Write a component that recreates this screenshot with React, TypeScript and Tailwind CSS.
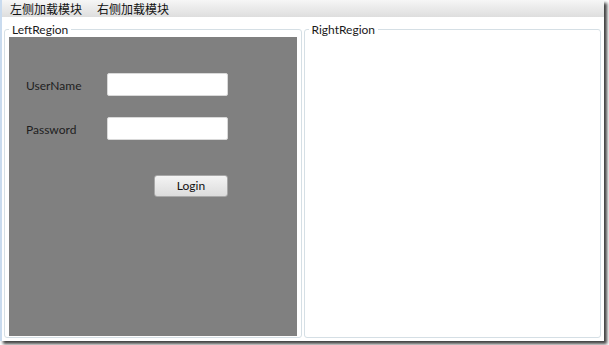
import * as React from "react";

// ─── Form row ────────────────────────────────────────────────────────────────

function Field({ label, type = "text" }: { label: string; type?: string }) {
  return (
    <div className="flex items-center h-[23px]">
      <span className="w-[81px] text-[12px] text-[#1e1e1e] translate-y-[1px]">{label}</span>
      <input
        type={type}
        className="w-[121px] h-[23px] bg-white border border-[#d9d9d9] rounded-[2px] outline-none"
      />
    </div>
  );
}

// ─── Region (WPF-style group box) ─────────────────────────────────────────────

function Region({ title, children }: { title: string; children?: React.ReactNode }) {
  return (
    <fieldset className="flex-1 flex flex-col h-[316px] border border-[#d5dfe5] rounded-[3px] px-[4px] pb-[1px] min-w-0">
      <legend className="px-[3px] text-[12px] leading-[15px] text-[#1a1a1a]">{title}</legend>
      {children}
    </fieldset>
  );
}

export default function App() {
  return (
    <div
      className="w-[609px] h-[345px] bg-white"
      style={{ fontFamily: '"Lato", "Noto Sans", "Noto Sans CJK SC", sans-serif' }}
    >
      <div className="w-[604px] h-[341px] flex flex-col bg-white border-l-2 border-[#c9dbef] shadow-[3px_3px_3px_rgba(0,0,0,0.75)]">
        {/* Menu */}
        <div className="h-[18px] flex items-center gap-[15px] pl-[8px] bg-gradient-to-b from-[#f6f6f6] to-[#dedede] border-b border-white">
          <span className="text-[12px] leading-none text-[#111]" style={{ fontFamily: '"Noto Sans CJK SC", sans-serif' }}>左侧加载模块</span>
          <span className="text-[12px] leading-none text-[#111]" style={{ fontFamily: '"Noto Sans CJK SC", sans-serif' }}>右侧加载模块</span>
        </div>

        {/* Regions */}
        <div className="flex gap-[2px] pl-[2px] pr-[3px] pt-[4px]">
          <Region title="LeftRegion">
            <div className="h-[300px] bg-[#808080] pl-[17px] pt-[36px] flex flex-col">
              <Field label="UserName" />
              <div className="mt-[21px]">
                <Field label="Password" type="password" />
              </div>
              <button className="mt-[35px] ml-[128px] w-[74px] h-[22px] rounded-[3px] border border-[#a8a8a8] bg-gradient-to-b from-[#f4f4f4] to-[#dcdcdc] text-[12px] text-[#111]">
                Login
              </button>
            </div>
          </Region>
          <Region title="RightRegion" />
        </div>
      </div>
    </div>
  );
}
